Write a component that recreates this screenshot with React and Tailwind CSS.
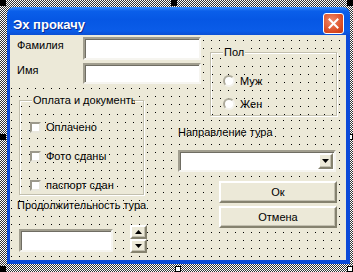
import React from 'react';

const grid =
  'bg-[#ece9d8] bg-[linear-gradient(90deg,#ece9d8_7px,transparent_7px),linear-gradient(#ece9d8_7px,#000_7px)] bg-[length:8px_8px] bg-[position:2px_6px]';

const sunken =
  'bg-white border-2 border-t-[#a19e8f] border-l-[#a19e8f] border-b-[#f6f5f0] border-r-[#f6f5f0] shadow-[inset_1px_1px_0_#6f6d63]';

const raised =
  'bg-[#ece9d8] border-2 border-t-white border-l-white border-b-[#85826f] border-r-[#85826f] shadow-[inset_-1px_-1px_0_#c3c0b0]';

function Handle({ className, hollow }) {
  return (
    <div
      className={`absolute w-[6px] h-[6px] ${hollow ? 'bg-white border border-black' : 'bg-black'} ${className}`}
    />
  );
}

// рамка с подписью (Frame из VBA)
function Frame({ className, title, titleClass, children }) {
  return (
    <div
      className={`absolute border border-[#c2bfae] shadow-[inset_1px_1px_0_#fff,1px_1px_0_#fff] ${grid} ${className}`}
    >
      <span
        className={`absolute left-[12px] top-[-8px] bg-[#ece9d8] px-[1px] leading-[14px] whitespace-nowrap overflow-hidden ${titleClass || ''}`}
      >
        {title}
      </span>
      {children}
    </div>
  );
}

function Radio({ label }) {
  return (
    <div className="flex items-center gap-[5px] leading-[12px]">
      <span className="w-[12px] h-[12px] rounded-full bg-white border-2 border-[#aeab9c] border-r-[#f3f2ec] border-b-[#f3f2ec]" />
      <span>{label}</span>
    </div>
  );
}

function Check({ label }) {
  return (
    <div className="flex items-center gap-[5px] leading-[14px]">
      <span className="w-[11px] h-[11px] bg-white border-2 border-t-[#9c998b] border-l-[#9c998b] border-b-[#e9e7dc] border-r-[#e9e7dc]" />
      <span>{label}</span>
    </div>
  );
}

function Tri({ up }) {
  return (
    <svg width="7" height="4" viewBox="0 0 7 4">
      {up ? <path d="M3.5 0 L7 4 L0 4 Z" fill="#000" /> : <path d="M0 0 L7 0 L3.5 4 Z" fill="#000" />}
    </svg>
  );
}

export default function App() {
  return (
    <div className="relative w-[353px] h-[272px] overflow-hidden bg-[repeating-conic-gradient(#333_0_25%,#fff_0_50%)] bg-[length:2px_2px] pl-[7px] pt-[7px] font-['Liberation_Sans',Arial,sans-serif] text-[11px] text-black">
      <Handle className="left-0 top-0" />
      <Handle className="left-[171px] top-0" />
      <Handle className="left-[347px] top-0" />
      <Handle className="left-0 top-[134px]" />
      <Handle className="left-[347px] top-[134px]" hollow />
      <Handle className="left-0 top-[266px]" />
      <Handle className="left-[175px] top-[266px]" hollow />
      <Handle className="left-[347px] top-[266px]" hollow />

      <div className="relative w-[343px] h-[257px] flex flex-col">
        {/* заголовок */}
        <div className="h-[28px] flex items-center justify-between pt-[4px] pl-[6px] pr-[6px] rounded-t-[7px] bg-[linear-gradient(#3d8ef6_0,#0a5fea_4px,#0657e4_45%,#0a5ce8_85%,#0b4fd4_100%)]">
          <span className="mt-[2px] text-white font-bold text-[13px] leading-none [text-shadow:1px_1px_#0b2a8c]">
            Эх прокачу
          </span>
          <div className="w-[21px] h-[21px] rounded-[3px] border border-white bg-[radial-gradient(circle_at_40%_35%,#f08a6a,#d9481f_70%,#c23d16)] flex items-center justify-center">
            <svg width="11" height="11" viewBox="0 0 11 11">
              <path d="M1.5 1.5 L9.5 9.5 M9.5 1.5 L1.5 9.5" stroke="#fff" strokeWidth="2" strokeLinecap="square" />
            </svg>
          </div>
        </div>

        {/* форма */}
        <div className="flex-1 border-l-[3px] border-r-[4px] border-b-[4px] border-[#0b4ad8]">
          <div className={`relative w-full h-full ${grid}`}>
            {/* фамилия / имя */}
            <div className="absolute left-0 top-[1px] flex">
              <div className="w-[72px] h-[51px] bg-[#ece9d8] flex flex-col pl-[7px]">
                <span className="h-[22px] flex items-center mt-[-2px]">Фамилия</span>
                <span className="h-[22px] flex items-center mt-[3px]">Имя</span>
              </div>
              <div className="ml-[1px] mt-[1px] flex flex-col gap-[3px]">
                <div className={`w-[118px] h-[23px] ${sunken}`} />
                <div className={`w-[118px] h-[21px] ${sunken}`} />
              </div>
            </div>

            <Frame className="left-[200px] top-[17px] w-[127px] h-[64px]" title="Пол">
              <div className="flex flex-col gap-[11px] pl-[12px] pt-[22px]">
                <Radio label="Муж" />
                <Radio label="Жен" />
              </div>
            </Frame>

            <Frame
              className="left-[9px] top-[65px] w-[125px] h-[95px]"
              title="Оплата и документы"
              titleClass="w-[103px]"
            >
              <div className="flex flex-col gap-[15px] pl-[10px] pt-[19px]">
                <Check label="Оплачено" />
                <Check label="Фото сданы" />
                <Check label="паспорт сдан" />
              </div>
            </Frame>

            {/* направление тура + кнопки */}
            <div className="absolute left-[168px] top-[90px] w-[159px] flex flex-col">
              <span className="leading-[14px]">Направление тура</span>
              <div className={`mt-[11px] w-[158px] h-[22px] ${sunken} flex justify-end p-[1px]`}>
                <div className={`w-[15px] h-full ${raised} flex items-center justify-center`}>
                  <Tri />
                </div>
              </div>
              <div className="mt-[9px] self-end flex flex-col gap-[3px]">
                <button className={`w-[118px] h-[22px] ${raised} flex items-center justify-center`}>Ок</button>
                <button className={`w-[118px] h-[22px] ${raised} flex items-center justify-center`}>Отмена</button>
              </div>
            </div>

            {/* продолжительность */}
            <div className="absolute left-[7px] top-[163px] flex flex-col">
              <span className="leading-[14px]">Продолжительность тура</span>
              <div className="mt-[13px] flex items-start">
                <div className={`mt-[4px] ml-[2px] w-[94px] h-[23px] ${sunken}`} />
                <div className="ml-[17px] w-[17px] h-[28px] flex flex-col">
                  <div className={`flex-1 ${raised} flex items-center justify-center`}>
                    <Tri up />
                  </div>
                  <div className={`flex-1 ${raised} flex items-center justify-center`}>
                    <Tri />
                  </div>
                </div>
              </div>
            </div>
          </div>
        </div>
      </div>
    </div>
  );
}
